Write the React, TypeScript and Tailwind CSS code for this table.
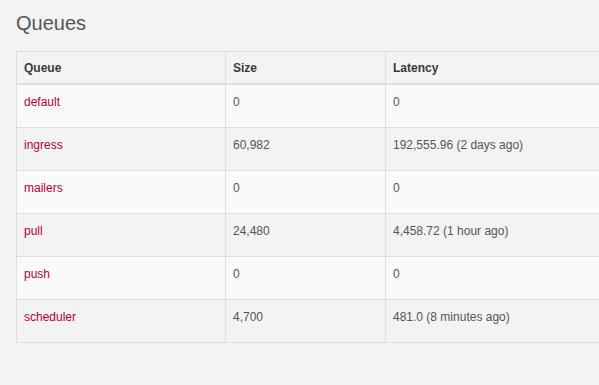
const queues = [
  { name: "default", size: "0", latency: "0" },
  { name: "ingress", size: "60,982", latency: "192,555.96 (2 days ago)" },
  { name: "mailers", size: "0", latency: "0" },
  { name: "pull", size: "24,480", latency: "4,458.72 (1 hour ago)" },
  { name: "push", size: "0", latency: "0" },
  { name: "scheduler", size: "4,700", latency: "481.0 (8 minutes ago)" },
];

// ── Queues page ───────────────────────────────────────────────────
export default function App() {
  return (
    <div className="h-screen w-full overflow-hidden bg-[#f3f3f3] px-4 pt-[12px] font-['Liberation_Sans',Arial,sans-serif]">
      <h3 className="mb-[17px] text-[20px] leading-[22px] text-[#555]">Queues</h3>

      <div className="w-[1000px] text-[12px] leading-[20px]">
        {/* Header */}
        <div className="flex h-[34px] border-t border-b-2 border-[#dedede] font-bold text-[#3a3a3a]">
          <div className="flex w-[209px] items-center border-l border-[#dedede] pl-[7px]">Queue</div>
          <div className="flex w-[160px] items-center border-l border-[#dedede] pl-[7px]">Size</div>
          <div className="flex w-[420px] items-center border-l border-[#dedede] pl-[7px]">Latency</div>
        </div>

        {/* Rows */}
        {queues.map((q, i) => (
          <div
            key={q.name}
            className={`flex h-[43px] border-b border-[#dedede] text-[#555] ${i % 2 === 0 ? "bg-[#fafafa]" : ""}`}
          >
            <div className="w-[209px] border-l border-[#dedede] pl-[7px] pt-[7px]">
              <a href="#" className="text-[#b1003e]">{q.name}</a>
            </div>
            <div className="w-[160px] border-l border-[#dedede] pl-[7px] pt-[7px]">{q.size}</div>
            <div className="w-[420px] border-l border-[#dedede] pl-[7px] pt-[7px]">{q.latency}</div>
          </div>
        ))}
      </div>
    </div>
  );
}
